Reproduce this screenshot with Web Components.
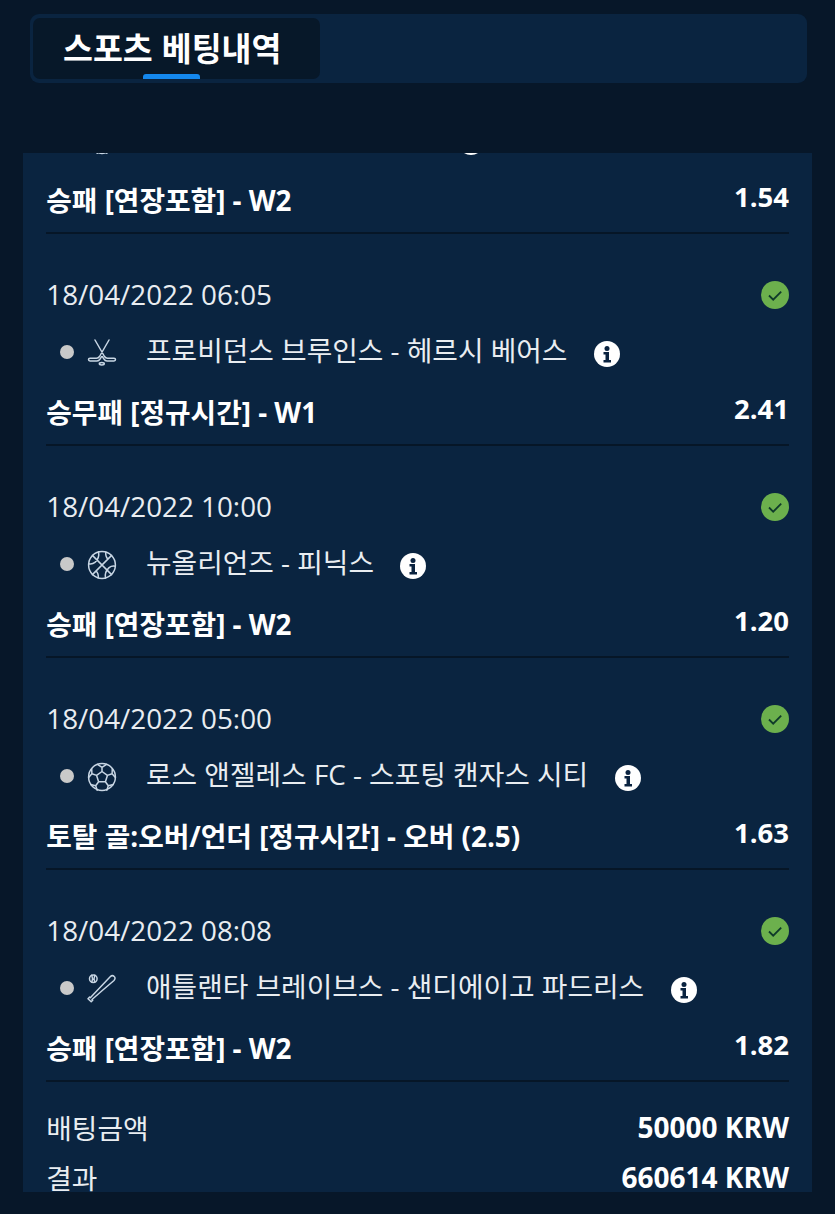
<!DOCTYPE html>
<html lang="ko"><head><meta charset="utf-8"><title>스포츠 베팅내역</title>
<style>
html,body{margin:0;padding:0;background:#071729}
body{width:835px;height:1214px;overflow:hidden;font-family:"Open Sans","Noto Sans CJK KR",sans-serif;color:#fff}
</style></head><body>
<history-page>
  <tab-bar slot="tabs" label="스포츠 베팅내역"></tab-bar>
  <bet-row tail sport="soccer" gap="285" market="승패 [연장포함] - W2" odds="1.54"></bet-row>
  <bet-row date="18/04/2022 06:05" sport="hockey" name="프로비던스 브루인스 - 헤르시 베어스" market="승무패 [정규시간] - W1" odds="2.41"></bet-row>
  <bet-row date="18/04/2022 10:00" sport="basketball" name="뉴올리언즈 - 피닉스" market="승패 [연장포함] - W2" odds="1.20"></bet-row>
  <bet-row date="18/04/2022 05:00" sport="soccer" name="로스 앤젤레스 FC - 스포팅 캔자스 시티" market="토탈 골:오버/언더 [정규시간] - 오버 (2.5)" odds="1.63"></bet-row>
  <bet-row date="18/04/2022 08:08" sport="baseball" name="애틀랜타 브레이브스 - 샌디에이고 파드리스" market="승패 [연장포함] - W2" odds="1.82"></bet-row>
  <total-row label="배팅금액" value="50000 KRW"></total-row>
  <total-row label="결과" value="660614 KRW"></total-row>
</history-page>
<script>
const ICONS={
hockey:`<path d="M22 2 12.500 18.500c-.8 1.300-1.500 1.800-3 1.800H3c-1 0-1.500.6-1.500 1.300s.5 1.400 1.500 1.400h7c1.500 0 2.300-.6 3-1.800l1.600-2.600M8 2l9.500 16.500c.8 1.300 1.500 1.800 3 1.800H27c1 0 1.500.6 1.500 1.300s-.5 1.400-1.500 1.400h-7c-1.500 0-2.300-.6-3-1.800l-1.600-2.600"/><ellipse cx="14.800" cy="25.800" rx="2.500" ry="1.200"/>`,
basketball:`<circle cx="15" cy="15" r="13.400"/><path d="M5.400 5.400 24.600 24.600M24.600 5.400 5.400 24.600M11.500 1.800c1 4.600-.8 8-3.600 10.600-1.900 1.600-4 1.900-6.300 1.400M18.500 28.200c-1-4.600.8-8 3.600-10.600 1.900-1.600 4-1.900 6.300-1.400M18.800 2c-.4 3 .4 5.400 2.200 7.200M9 20.800c1.800 1.800 2.600 4.200 2.200 7.200"/>`,
soccer:`<circle cx="15" cy="15" r="13.400"/><path d="m15 9.500 5.400 3.900-2 6.300h-6.800l-2-6.300zM15 9.500V5.400M20.400 13.400l4.700-1.700M18.400 19.700l2.900 4M11.600 19.700l-2.900 4M9.600 13.400l-4.700-1.700M15 5.400l-4.500-3M15 5.400l4.500-3M25.100 11.700l.2-5M25.100 11.700l3.300 3.800M21.300 23.700l5-1.200M21.300 23.700l-1.500 4.500M8.700 23.700l-5-1.200M8.700 23.700l1.500 4.500M4.900 11.700l-.2-5M4.900 11.700l-3.300 3.800"/>`,
baseball:`<circle cx="6.300" cy="4.700" r="3.800"/><path d="M4.800 1.300c.9 2.200.9 4.600 0 6.800M7.800 1.300c-.9 2.200-.9 4.600 0 6.800"/><path d="M1 24.700 4.200 27.700 5.700 26.200 5 25.500 15 16.700 27 6.500C28.400 5 28.300 3.500 27.200 2.500 26 1.300 24.500 1.500 23.200 2.800L13 13.500 3.300 23.800 2.600 23.100z"/>`};
const def=(n,html)=>customElements.define(n,class extends HTMLElement{
  connectedCallback(){if(this.shadowRoot)return;const s=this.attachShadow({mode:"open"});s.innerHTML=html(a=>this.getAttribute(a)||"",this);}
});
def("history-page",()=>`<style>
:host{display:block}
.wrap{display:flex;flex-direction:column;padding-top:14px}
.panel{margin:70px 23px 0;height:1039px;overflow:hidden;background:#0a2440;padding:0 23px;box-sizing:border-box}
</style><div class="wrap"><slot name="tabs"></slot><div class="panel"><slot></slot></div></div>`);
def("tab-bar",a=>`<style>
:host{display:block;margin:0 28px 0 30px;height:69px;background:#0a2440;border-radius:9px;box-sizing:border-box;padding:4px 3px}
.tab{width:287px;height:61px;background:#071829;border-radius:7px;display:flex;flex-direction:column;align-items:flex-start;box-sizing:border-box;padding-left:30px;position:relative}
.t{font:700 32.500px/58px "Noto Sans CJK KR","Open Sans",sans-serif;color:#fff;white-space:nowrap}
.u{position:absolute;left:110px;bottom:0;width:57px;height:5px;border-radius:3px 3px 0 0;background:#1488ee}
</style><div class="tab"><span class="t">${a("label")}</span><i class="u"></i></div>`);
def("bet-row",(a,el)=>{const tail=el.hasAttribute("tail");const gap=a("gap");return `<style>
:host{display:block;border-bottom:2px solid #061627;box-sizing:border-box;height:212px;padding-top:39px}
:host([tail]){height:auto;margin-top:-35px;padding-top:0}
*{box-sizing:border-box}
.d{display:flex;justify-content:space-between;align-items:center;height:42px;margin-bottom:15px;padding-left:.3px;font-size:27.800px;color:#e9edf1}
.chk{width:28px;height:28px;flex:none;margin-top:2px}
.n{display:flex;align-items:center;height:40px;padding-left:1px;font-size:27.800px;color:#e9edf1;white-space:nowrap}
.n span{margin-top:-3px}
.dot{width:14px;height:14px;border-radius:50%;background:#c9c9c9;margin:4px 0 0 13px;flex:none}
.ic{width:30px;height:30px;margin:6px 29px 0 13px;flex:none;fill:none;stroke:#c8d6e4;stroke-width:1.500;stroke-linejoin:round;stroke-linecap:round}
.i{width:26px;height:26px;margin:7px 0 0 26.500px;flex:none}
:host([tail]) .ic{margin-top:4px}
:host([tail]) .i{margin-top:7px}
.m{display:flex;justify-content:space-between;align-items:center;height:53.500px;margin-top:20.500px;padding:0 0 13.500px .3px;font-size:27.800px;font-weight:700;color:#fff;white-space:nowrap}
.m b{font-weight:700;font-size:27.500px;position:relative;top:-2px}
</style>
${tail?"":`<div class="d"><span>${a("date")}</span><svg class="chk" viewBox="0 0 28 28"><circle cx="14" cy="14" r="14" fill="#6cb04d"/><path d="m8 14.500 4.200 4.200 8-8" fill="none" stroke="#0f3a2a" stroke-width="1.800"/></svg></div>`}
<div class="n"><i class="dot"></i><svg class="ic" viewBox="0 0 30 30">${ICONS[a("sport")]}</svg>${gap?`<i style="width:${gap}px;flex:none"></i>`:`<span>${a("name")}</span>`}<svg class="i" viewBox="0 0 26 26"><circle cx="13" cy="13" r="13" fill="#fff"/><circle cx="13" cy="7.500" r="2.500" fill="#0a2340"/><path d="M9.500 11h5.500v8h2v2.500H9.500V19h2v-5.500h-2z" fill="#0a2340"/></svg></div>
<div class="m"><span>${a("market")}</span><b>${a("odds")}</b></div>`});
def("total-row",a=>`<style>
:host{display:flex;justify-content:space-between;align-items:center;height:50px;padding-left:.3px;font-size:27.800px;color:#e9edf1;white-space:nowrap}
:host(:first-of-type){margin-top:20px}
b{font-weight:700;color:#fff;font-size:28px}
</style><span>${a("label")}</span><b>${a("value")}</b>`);
</script>
</body></html>
